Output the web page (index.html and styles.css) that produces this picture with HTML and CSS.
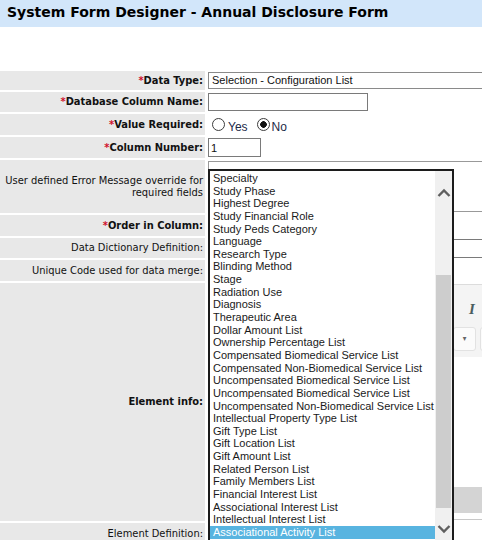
FILE: index.html
```html
<!DOCTYPE html>
<html lang="en">
<head>
    <meta charset="UTF-8">
    <meta name="viewport" content="width=device-width, initial-scale=1.0">
    <title>System Form Designer - Annual Disclosure Form</title>
    <link rel="stylesheet" href="styles.css">
</head>
<body>
    <div class="page-title">System Form Designer - Annual Disclosure Form</div>

    <form class="designer">
        <div class="row row-19">
            <div class="lbl"><span class="req">*</span><b>Data Type:</b></div>
            <div class="fld"><div class="sel">Selection - Configuration List</div></div>
        </div>
        <div class="row row-20">
            <div class="lbl"><span class="req">*</span><b>Database Column Name:</b></div>
            <div class="fld"><input class="txt txt-name" type="text"></div>
        </div>
        <div class="row">
            <div class="lbl"><span class="req">*</span><b>Value Required:</b></div>
            <div class="fld radios">
                <input class="radio" type="radio" name="req" id="reqYes"><label for="reqYes">Yes</label>
                <input class="radio" type="radio" name="req" id="reqNo" checked><label for="reqNo">No</label>
            </div>
        </div>
        <div class="row">
            <div class="lbl"><span class="req">*</span><b>Column Number:</b></div>
            <div class="fld"><input class="txt txt-num" type="text" value="1"></div>
        </div>
        <div class="row row-53">
            <div class="lbl">User defined Error Message override for<br>required fields</div>
            <div class="fld fld-top"><textarea class="area"></textarea></div>
        </div>
        <div class="row">
            <div class="lbl"><span class="req">*</span><b>Order in Column:</b></div>
            <div class="fld"><input class="txt txt-num" type="text"></div>
        </div>
        <div class="row row-20">
            <div class="lbl">Data Dictionary Definition:</div>
            <div class="fld"><input class="txt txt-wide" type="text"></div>
        </div>
        <div class="row">
            <div class="lbl">Unique Code used for data merge:</div>
            <div class="fld"><input class="txt txt-num" type="text"></div>
        </div>
        <div class="row row-238">
            <div class="lbl"><b>Element info:</b></div>
            <div class="fld fld-top">
                <div class="editor">
                    <div class="toolbar">
                        <div class="tool-row tool-row-a">
                            <span class="tool-box tool-format"></span>
                            <span class="tool-btn tool-b">B</span>
                            <span class="tool-btn tool-i">I</span>
                        </div>
                        <div class="tool-row tool-row-b">
                            <span class="tool-box tool-size"></span>
                            <span class="tool-box tool-drop">&#9662;</span>
                            <span class="tool-box tool-next"></span>
                        </div>
                    </div>
                    <div class="editor-body"></div>
                    <div class="editor-status"></div>
                </div>
            </div>
        </div>
        <div class="row">
            <div class="lbl">Element Definition:</div>
            <div class="fld"></div>
        </div>
    </form>

    <div class="listbox">
        <div class="list-items">
            <div class="opt">Specialty</div>
            <div class="opt">Study Phase</div>
            <div class="opt">Highest Degree</div>
            <div class="opt">Study Financial Role</div>
            <div class="opt">Study Peds Category</div>
            <div class="opt">Language</div>
            <div class="opt">Research Type</div>
            <div class="opt">Blinding Method</div>
            <div class="opt">Stage</div>
            <div class="opt">Radiation Use</div>
            <div class="opt">Diagnosis</div>
            <div class="opt">Therapeutic Area</div>
            <div class="opt">Dollar Amount List</div>
            <div class="opt">Ownership Percentage List</div>
            <div class="opt">Compensated Biomedical Service List</div>
            <div class="opt">Compensated Non-Biomedical Service List</div>
            <div class="opt">Uncompensated Biomedical Service List</div>
            <div class="opt">Uncompensated Biomedical Service List</div>
            <div class="opt">Uncompensated Non-Biomedical Service List</div>
            <div class="opt">Intellectual Property Type List</div>
            <div class="opt">Gift Type List</div>
            <div class="opt">Gift Location List</div>
            <div class="opt">Gift Amount List</div>
            <div class="opt">Related Person List</div>
            <div class="opt">Family Members List</div>
            <div class="opt">Financial Interest List</div>
            <div class="opt">Associational Interest List</div>
            <div class="opt">Intellectual Interest List</div>
            <div class="opt selected">Associational Activity List</div>
        </div>
        <div class="scrollbar">
            <svg class="arrow arrow-up" width="14" height="10" viewBox="0 0 14 10"><path d="M1.5 8 L7 2.5 L12.5 8" fill="none" stroke="#5f5f5f" stroke-width="2.4"/></svg>
            <div class="thumb"></div>
            <svg class="arrow arrow-down" width="14" height="10" viewBox="0 0 14 10"><path d="M1.5 2 L7 7.5 L12.5 2" fill="none" stroke="#5f5f5f" stroke-width="2.4"/></svg>
        </div>
    </div>
</body>
</html>
```

FILE: styles.css
```css
html, body {
    margin: 0;
    overflow: hidden;
}
body {
    position: relative;
    font-family: "DejaVu Sans Condensed", "DejaVu Sans", sans-serif;
    font-size: 11px;
    color: #111;
    background: #fff;
}
.page-title {
    height: 27px;
    line-height: 25px;
    padding-left: 7px;
    margin-bottom: 44px;
    background-color: #d2e6fa;
    font-family: "DejaVu Sans", sans-serif;
    font-weight: bold;
    font-size: 14px;
    color: #000;
}

/* form rows */
.designer {
    display: flex;
    flex-direction: column;
    gap: 2px;
}
.row {
    display: flex;
    gap: 1px;
    height: 21px;
}
.row-19 { height: 19px; }
.row-20 { height: 20px; }
.row-53 { height: 53px; }
.row-238 { height: 238px; }
.lbl {
    flex: none;
    width: 205px;
    box-sizing: border-box;
    padding-right: 2px;
    display: flex;
    align-items: center;
    justify-content: flex-end;
    text-align: right;
    white-space: nowrap;
    line-height: 12px;
    background-color: #e8e8e8;
}
.req {
    color: #d0102c;
    font-weight: bold;
}
.fld {
    display: flex;
    align-items: center;
    padding-left: 2px;
    white-space: nowrap;
}
.fld-top {
    align-items: flex-start;
}

/* inputs */
.sel, .txt, .area {
    box-sizing: border-box;
    margin: 0;
    background: #fff;
    font-family: "Liberation Sans", Arial, sans-serif;
    font-size: 11px;
    color: #111;
}
.sel {
    width: 320px;
    height: 17px;
    line-height: 15px;
    padding-left: 3px;
    border: 1px solid #8a8a8a;
}
.txt {
    height: 19px;
    padding: 0 2px;
    border: 1px solid #7a7a7a;
}
.txt-name {
    width: 160px;
    height: 18px;
}
.txt-num {
    width: 53px;
}
.txt-wide {
    width: 400px;
}
.area {
    width: 400px;
    height: 51px;
    margin-top: 1px;
    border: 1px solid #999;
    resize: none;
}

/* radios */
.radios {
    font-family: "Liberation Sans", Arial, sans-serif;
    font-size: 12px;
    color: #1c2a48;
}
.radios label {
    padding-top: 4px;
}
.radio {
    appearance: none;
    width: 13px;
    height: 13px;
    margin: 0 3px 0 4px;
    border: 1px solid #3c3c3c;
    border-radius: 50%;
    background: #fff;
}
.radio:checked {
    background: radial-gradient(circle, #111 0 3px, #fff 3.6px);
}
#reqNo {
    margin-left: 9px;
    margin-right: 2px;
}

/* rich text editor */
.editor {
    display: flex;
    flex-direction: column;
    width: 420px;
    height: 236px;
    margin-top: 1px;
    box-sizing: border-box;
    border: 1px solid #dcdcdc;
    border-bottom-color: #c8c8c8;
}
.toolbar {
    height: 72px;
    box-sizing: border-box;
    padding: 6px 0;
    background-color: #f4f4f4;
}
.tool-row {
    display: flex;
    gap: 4px;
    padding-left: 4px;
}
.tool-row-a {
    height: 36px;
    align-items: center;
}
.tool-row-b {
    height: 24px;
}
.tool-box {
    box-sizing: border-box;
    height: 24px;
    border: 1px solid #e2e2e2;
    border-radius: 3px;
    background: #fbfbfb;
}
.tool-format { width: 220px; }
.tool-size { width: 236px; }
.tool-drop {
    width: 23px;
    text-align: center;
    line-height: 22px;
    font-size: 8px;
    color: #666;
}
.tool-next { width: 30px; }
.tool-btn {
    width: 22px;
    text-align: center;
    font-family: "Liberation Serif", serif;
    font-size: 15px;
    font-weight: bold;
    color: #4a5d5f;
}
.tool-b { width: 20px; }
.tool-i { font-style: italic; }
.editor-body {
    height: 130px;
    background: #fff;
}
.editor-status {
    height: 26px;
    background-color: #d4d4d4;
}

/* open list of the Data Type select */
.listbox {
    position: absolute;
    left: 208px;
    top: 169px;
    width: 246px;
    height: 400px;
    box-sizing: border-box;
    display: flex;
    border: 2px solid #1c1c1c;
    background: #fff;
}
.list-items {
    width: 225px;
    padding-top: 1px;
    font-family: "Liberation Sans", Arial, sans-serif;
    font-size: 11px;
    color: #1a1a1a;
}
.opt {
    height: 12.643px;
    line-height: 12.643px;
    padding-left: 3px;
    white-space: nowrap;
}
.opt.selected {
    height: 13px;
    background-color: #58b4e0;
    color: #fff;
}
.scrollbar {
    position: relative;
    width: 17px;
    background-color: #f0f0f0;
}
.thumb {
    position: absolute;
    left: 1px;
    top: 104px;
    width: 15px;
    height: 233px;
    background-color: #cdcdcd;
}
.arrow {
    position: absolute;
    left: 2px;
}
.arrow-up { top: 17px; }
.arrow-down { top: 353px; }
```
